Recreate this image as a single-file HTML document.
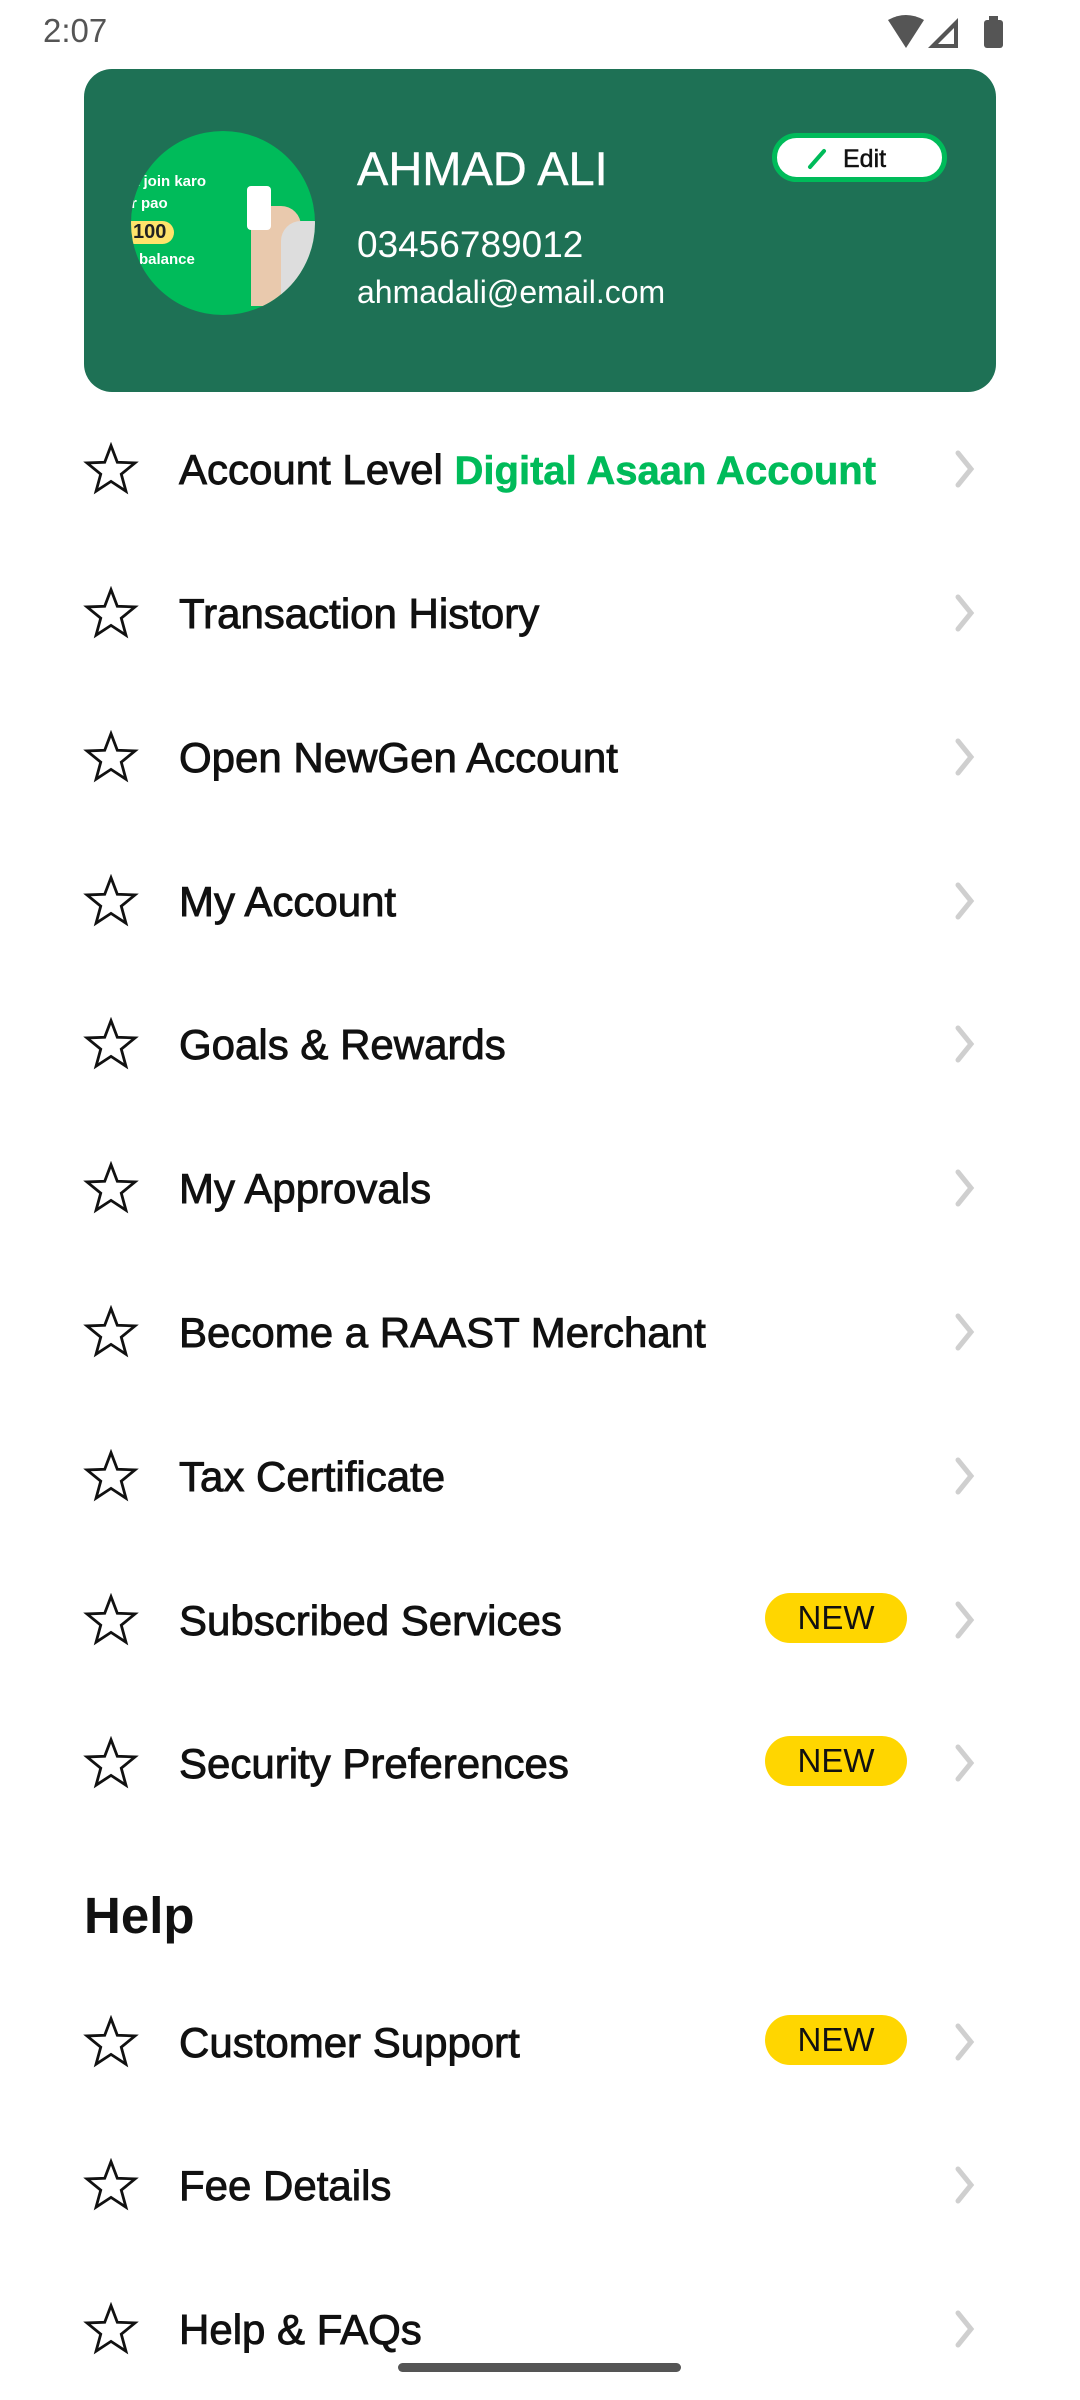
<!DOCTYPE html>
<html><head><meta charset="utf-8"><style>
*{margin:0;padding:0;box-sizing:border-box}
body{width:1080px;height:2400px;background:#fff;font-family:"Liberation Sans",sans-serif;position:relative;overflow:hidden;color:#111}
.sb{position:absolute;top:0;left:0;width:1080px;height:62px;background:#fff}
.time{position:absolute;left:43px;top:12px;font-size:33px;color:#555}
.card{position:absolute;left:84px;top:69px;width:912px;height:323px;background:#1e7155;border-radius:28px}
.av{position:absolute;border-radius:50%;width:184px;height:184px;background:#00bb5a;overflow:hidden}
.name{position:absolute;font-size:47px;color:#fff;-webkit-text-stroke:0.4px #fff}
.phone{position:absolute;font-size:37px;color:#fff}
.email{position:absolute;font-size:32px;color:#fff}
.edit{position:absolute;width:175px;height:49px;border:5px solid #00bb5a;border-radius:25px;background:#fff;font-size:25px;color:#111;-webkit-text-stroke:0.5px #111}
.item{position:absolute;left:0;width:1080px;height:80px}
.item svg.star{position:absolute;left:83px;top:14px}
.item .t{position:absolute;left:179px;top:18px;font-size:42px;color:#111;-webkit-text-stroke:0.9px #111;white-space:nowrap}
.item svg.chev{position:absolute;left:952px;top:21px}
.new{position:absolute;left:765px;top:14px;width:142px;height:50px;border-radius:25px;background:#ffd600;font-size:33px;text-align:center;line-height:50px;color:#111}
.help{position:absolute;left:84px;top:1886px;font-size:51px;font-weight:bold}
.nav{position:absolute;left:398px;top:2363px;width:283px;height:9px;border-radius:5px;background:#555}
</style></head><body>
<div class="sb"><div class="time">2:07</div>
<svg style="position:absolute;left:886px;top:14px" width="120" height="36" viewBox="0 0 120 36">
<path d="M2 6 Q20 -4 38 6 L20 34 Z" fill="#555"/>
<path d="M72 4 L72 34 L42 34 Z M68 14 L68 30 L52 30 Z" fill="#555" fill-rule="evenodd"/>
<rect x="98" y="6" width="19" height="28" rx="3" fill="#555"/><rect x="103" y="2" width="9" height="5" fill="#555"/>
</svg>
</div>
<div class="card">
<div class="av" style="left:47px;top:62px">
<div style="position:absolute;left:0;top:40px;color:#fff;font-size:15px;font-weight:bold;line-height:22px">a join karo<br>r pao</div>
<div style="position:absolute;left:0;top:90px;background:#ffe36b;border-radius:0 14px 14px 0;padding:0 8px 0 2px;font-size:20px;font-weight:bold;color:#222">100</div>
<div style="position:absolute;left:8px;top:120px;color:#fff;font-size:15px;font-weight:bold">balance</div>
<div style="position:absolute;left:120px;top:75px;width:50px;height:100px;background:#e9c9ad;border-radius:20px 20px 0 0"></div>
<div style="position:absolute;left:150px;top:90px;width:40px;height:100px;background:#ddd;border-radius:20px 0 0 0"></div>
<div style="position:absolute;left:116px;top:55px;width:24px;height:44px;background:#fff;border-radius:4px"></div>
</div>
<div class="name" style="left:273px;top:72px">AHMAD ALI</div>
<div class="phone" style="left:273px;top:155px">03456789012</div>
<div class="email" style="left:273px;top:205px">ahmadali@email.com</div>
<div class="edit" style="left:688px;top:64px">
<svg style="position:absolute;left:30px;top:10px" width="20" height="22" viewBox="0 0 20 22"><path d="M3 19 L17 3" stroke="#00bb5a" stroke-width="4" stroke-linecap="round"/></svg>
<span style="position:absolute;left:66px;top:7px">Edit</span></div>
</div>

<div id="list"></div>
<div class="help">Help</div>
<div class="nav"></div>
<script>
var items=[["Account Level <span style='color:#00bb5a;-webkit-text-stroke:0.6px #00bb5a;font-weight:bold;font-size:40px'>Digital Asaan Account</span>",468,0],
["Transaction History",612,0],["Open NewGen Account",756,0],["My Account",900,0],["Goals &amp; Rewards",1043,0],["My Approvals",1187,0],["Become a RAAST Merchant",1331,0],["Tax Certificate",1475,0],["Subscribed Services",1619,1],["Security Preferences",1762,1],["Customer Support",2041,1],["Fee Details",2184,0],["Help &amp; FAQs",2328,0]];
var h="";
items.forEach(function(it){
h+='<div class="item" style="top:'+(it[1]-40)+'px"><svg class="star" width="56" height="54" viewBox="0 0 24 23"><path d="M12 1.5 L14.7 8.6 L22.3 8.9 L16.4 13.7 L18.4 21 L12 16.8 L5.6 21 L7.6 13.7 L1.7 8.9 L9.3 8.6 Z" fill="none" stroke="#111" stroke-width="1.2" stroke-linejoin="miter"/></svg><div class="t">'+it[0]+'</div>'+(it[2]?'<div class="new">NEW</div>':'')+'<svg class="chev" width="26" height="40" viewBox="0 0 26 40"><path d="M6 4 L19 20 L6 36" fill="none" stroke="#cfcfcf" stroke-width="5" stroke-linecap="round"/></svg></div>';
});
document.getElementById("list").innerHTML=h;
</script>
</body></html>
